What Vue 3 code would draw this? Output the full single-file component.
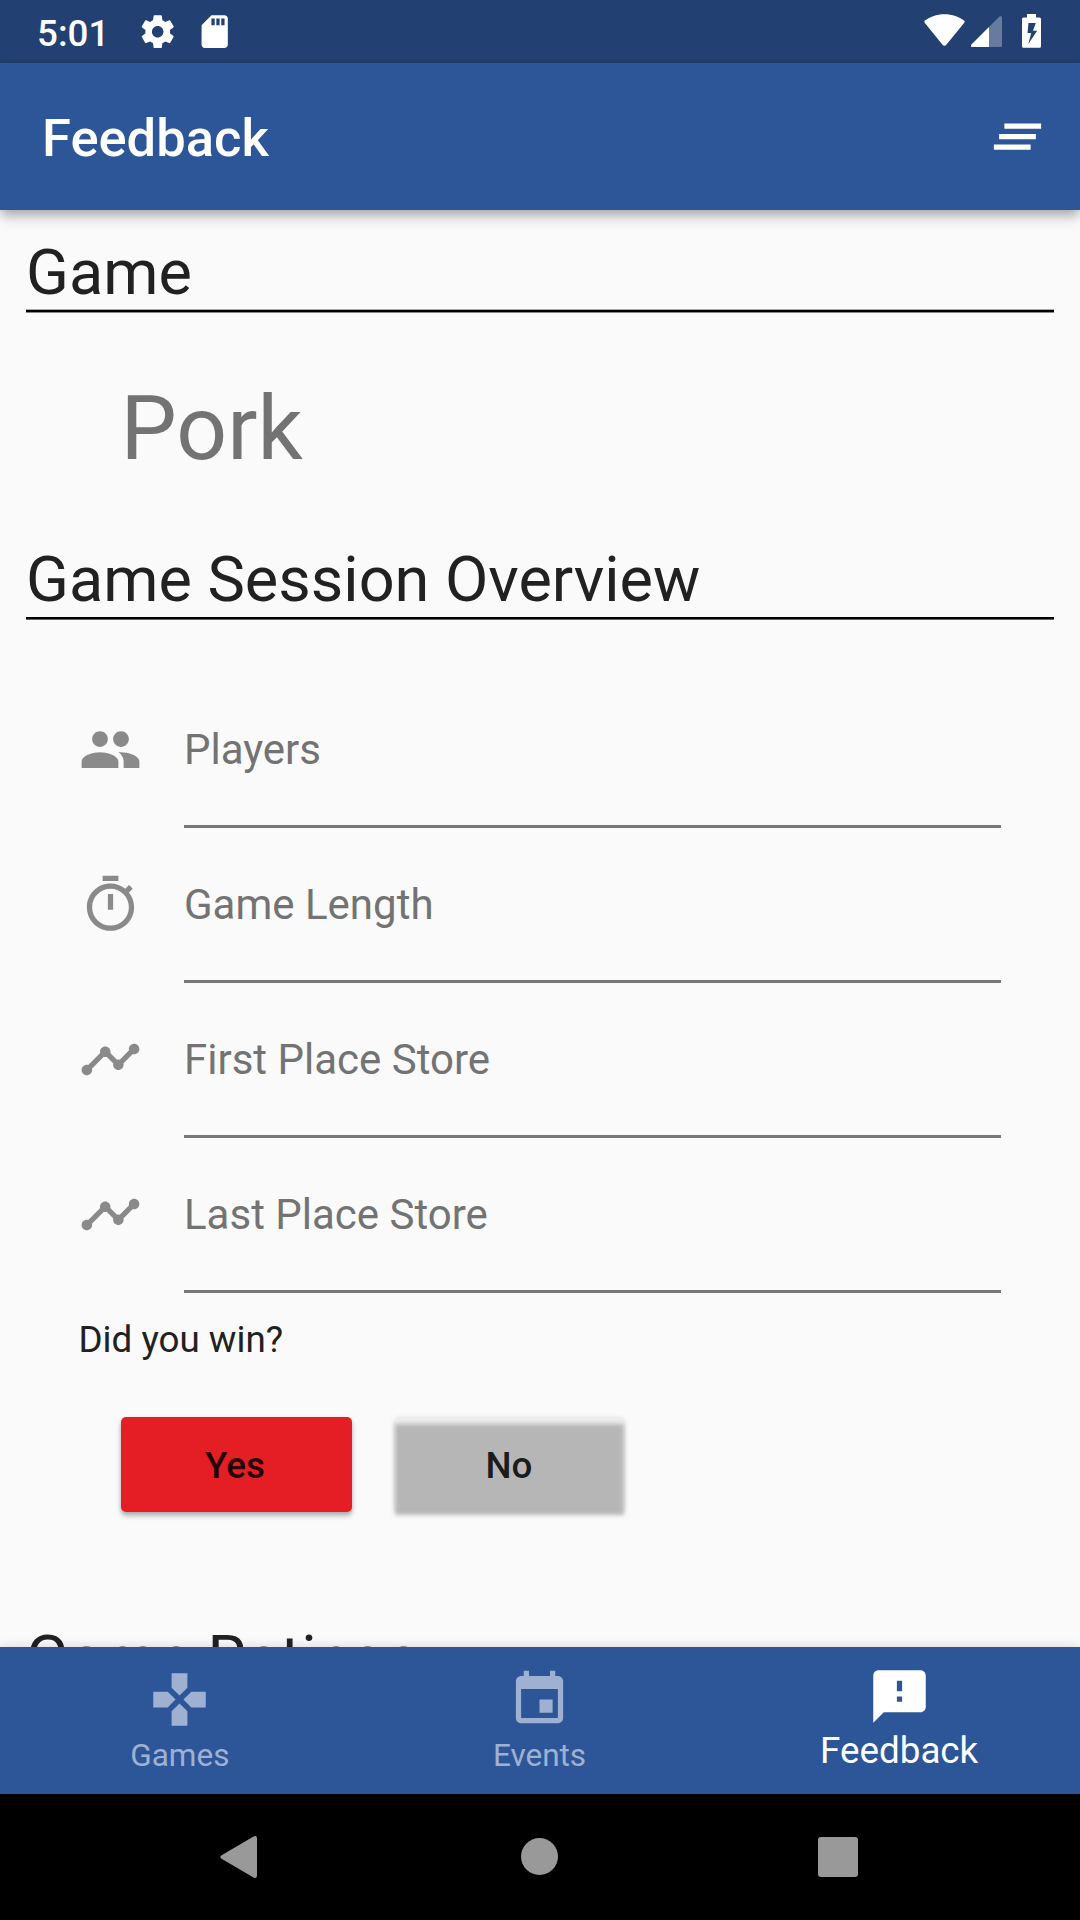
<script setup>
const fields = [
  { label: 'Players', icon: 'M16 11c1.66 0 2.99-1.34 2.99-3S17.66 5 16 5s-3 1.34-3 3 1.34 3 3 3zm-8 0c1.66 0 2.99-1.34 2.99-3S9.66 5 8 5 5 6.34 5 8s1.34 3 3 3zm0 2c-2.33 0-7 1.17-7 3.5V19h14v-2.5c0-2.33-4.67-3.5-7-3.5zm8 0c-.29 0-.62.02-.97.05 1.16.84 1.97 1.97 1.97 3.45V19h6v-2.5c0-2.33-4.67-3.5-7-3.5z' },
  { label: 'Game Length', icon: 'M15 1H9v2h6V1zm-4 13h2V8h-2v6zm8.03-6.61l1.42-1.42c-.43-.51-.9-.99-1.41-1.41l-1.42 1.42C16.07 4.74 14.12 4 12 4c-4.97 0-9 4.03-9 9s4.02 9 9 9 9-4.03 9-9c0-2.12-.74-4.07-1.97-5.61zM12 20c-3.87 0-7-3.13-7-7s3.13-7 7-7 7 3.13 7 7-3.13 7-7 7z' },
  { label: 'First Place Store', icon: 'M23 8c0 1.1-.9 2-2 2-.18 0-.35-.02-.51-.07l-3.56 3.55c.05.16.07.34.07.52 0 1.1-.9 2-2 2s-2-.9-2-2c0-.18.02-.36.07-.52l-2.55-2.55c-.16.05-.34.07-.52.07s-.36-.02-.52-.07l-4.55 4.56c.05.16.07.33.07.51 0 1.1-.9 2-2 2s-2-.9-2-2 .9-2 2-2c.18 0 .35.02.51.07l4.56-4.55C8.02 9.36 8 9.18 8 9c0-1.1.9-2 2-2s2 .9 2 2c0 .18-.02.36-.07.52l2.55 2.55c.16-.05.34-.07.52-.07s.36.02.52.07l3.55-3.56C19.02 8.35 19 8.18 19 8c0-1.1.9-2 2-2s2 .9 2 2z' },
]
fields.push({ label: 'Last Place Store', icon: fields[2].icon })

const tabs = [
  { label: 'Games', icon: 'M15 7.5V2H9v5.5l3 3 3-3zM7.5 9H2v6h5.5l3-3-3-3zM9 16.5V22h6v-5.5l-3-3-3 3zM16.5 9l-3 3 3 3H22V9h-5.5z' },
  { label: 'Events', icon: 'M17 12h-5v5h5v-5zM16 1v2H8V1H6v2H5c-1.11 0-1.99.9-1.99 2L3 19c0 1.1.89 2 2 2h14c1.1 0 2-.9 2-2V5c0-1.1-.9-2-2-2h-1V1h-2zm3 18H5V8h14v11z' },
  { label: 'Feedback', active: true, icon: 'M20 2H4c-1.1 0-1.99.9-1.99 2L2 22l4-4h14c1.1 0 2-.9 2-2V4c0-1.1-.9-2-2-2zm-7 12h-2v-2h2v2zm0-4h-2V6h2v4z' },
]
</script>

<template>
  <div class="screen">
    <div class="status">
      <span class="clock">5:01</span>
      <svg class="status-icon gear" viewBox="0 0 24 24"><path d="M19.43 12.98c.04-.32.07-.64.07-.98s-.03-.66-.07-.98l2.11-1.65c.19-.15.24-.42.12-.64l-2-3.46c-.12-.22-.39-.3-.61-.22l-2.49 1c-.52-.4-1.08-.73-1.69-.98l-.38-2.65C14.46 2.18 14.25 2 14 2h-4c-.25 0-.46.18-.49.42l-.38 2.65c-.61.25-1.17.59-1.69.98l-2.49-1c-.23-.09-.49 0-.61.22l-2 3.46c-.13.22-.07.49.12.64l2.11 1.65c-.04.32-.07.65-.07.98s.03.66.07.98l-2.11 1.65c-.19.15-.24.42-.12.64l2 3.46c.12.22.39.3.61.22l2.49-1c.52.4 1.08.73 1.69.98l.38 2.65c.03.24.24.42.49.42h4c.25 0 .46-.18.49-.42l.38-2.65c.61-.25 1.17-.59 1.69-.98l2.49 1c.23.09.49 0 .61-.22l2-3.46c.12-.22.07-.49-.12-.64l-2.11-1.65zM12 15.5c-1.93 0-3.5-1.57-3.5-3.5s1.57-3.5 3.5-3.5 3.5 1.57 3.5 3.5-1.57 3.5-3.5 3.5z" /></svg>
      <svg class="status-icon card" viewBox="0 0 24 24"><path d="M18 2h-8L4.02 8 4 20c0 1.1.9 2 2 2h12c1.1 0 2-.9 2-2V4c0-1.1-.9-2-2-2zm-6 6h-2V4h2v4zm3 0h-2V4h2v4zm3 0h-2V4h2v4z" /></svg>
      <svg class="system-icons" width="124" height="63" viewBox="920 0 124 63">
        <path d="M944.4 14.2C936.5 14.2 930 16.700 925 20.500Q923.800 21.500 924.700 22.800L942.500 44.700Q944.400 46.700 946.300 44.700L964.300 22.800Q965.200 21.500 964 20.500C959 16.700 952.500 14.200 944.400 14.200Z" />
        <path d="M1002 17.500V45.500Q1002 47 1000.500 47H972.500Q970 46.500 971.500 44.500L999.500 16.500Q1001.500 15 1002 17.500Z" opacity=".31" />
        <path d="M989 27V47H972.500Q970 46.500 971.500 44.500Z" />
        <path fill-rule="evenodd" d="M1027 14H1036V17.600H1039.500Q1041 17.600 1041 19.100V46.300Q1041 47.800 1039.500 47.800H1023.500Q1022 47.800 1022 46.300V19.100Q1022 17.600 1023.500 17.600H1027ZM1028.500 23L1027.500 33H1031.200L1028.300 44L1037.200 30.700H1033L1035.800 23Z" />
      </svg>
    </div>

    <header class="appbar">
      <h1>Feedback</h1>
      <svg class="icon" viewBox="0 0 24 24"><path d="M5 13h14v-2H5v2zm-2 4h14v-2H3v2zM7 7v2h14V7H7z" /></svg>
    </header>

    <main>
      <h2>Game</h2>
      <div class="rule first"></div>
      <p class="game-name">Pork</p>
      <h2 class="session">Game Session Overview</h2>
      <div class="rule"></div>
      <form class="fields" @submit.prevent>
        <label v-for="field in fields" :key="field.label" class="field">
          <svg class="icon" viewBox="0 0 24 24"><path :d="field.icon" /></svg>
          <span class="input">{{ field.label }}</span>
        </label>
        <p class="question">Did you win?</p>
        <div class="buttons">
          <button class="yes" type="button">Yes</button>
          <button class="no" type="button"><span>No</span></button>
        </div>
      </form>
      <h2 class="ratings">Game Ratings</h2>
    </main>

    <nav class="tabs">
      <div v-for="tab in tabs" :key="tab.label" class="tab" :class="{ active: tab.active }">
        <svg class="icon" viewBox="0 0 24 24"><path :d="tab.icon" /></svg>
        <span>{{ tab.label }}</span>
      </div>
    </nav>

    <div class="system-nav">
      <svg width="1080" height="126" viewBox="0 1794 1080 126">
        <path d="M222 1855L253.500 1836.600Q257 1835 257 1838.500V1875.500Q257 1879 253.500 1877.400L222 1859Q218.500 1857 222 1855Z" />
        <circle cx="539.500" cy="1856.500" r="18.500" />
        <rect x="818" y="1837" width="40" height="40" rx="3" />
      </svg>
    </div>
  </div>
</template>

<style>
body {
  margin: 0;
}
</style>

<style scoped>
.screen {
  width: 1080px;
  height: 1920px;
  display: flex;
  flex-direction: column;
  overflow: hidden;
  background: #fafafa;
  color: #212121;
  font-family: Roboto, sans-serif;
}
h1,
h2,
p {
  margin: 0;
  font-weight: 400;
}
svg {
  display: block;
  flex: none;
  fill: currentColor;
}
.icon {
  width: 63px;
  height: 63px;
}
.status {
  height: 63px;
  flex: none;
  display: flex;
  background: #224071;
  color: #fff;
}
.clock {
  width: 100.500px;
  margin-left: 37px;
  font-size: 36.75px;
  font-weight: 500;
  line-height: 67px;
}
.status-icon {
  width: 39.400px;
  height: 39.400px;
  margin-top: 12px;
}
.card {
  margin-left: 18.600px;
}
.system-icons {
  margin-left: auto;
  margin-right: 36px;
}
.appbar {
  z-index: 1;
  box-sizing: border-box;
  height: 147px;
  flex: none;
  display: flex;
  align-items: center;
  justify-content: space-between;
  padding: 0 31px 0 42px;
  background: #2d5698;
  color: #fff;
  box-shadow: 0 5px 10px -2px rgba(0, 0, 0, 0.2), 0 10px 13px rgba(0, 0, 0, 0.1), 0 3px 12px rgba(0, 0, 0, 0.12);
}
h1 {
  padding-top: 2px;
  font-size: 52.500px;
  font-weight: 500;
  line-height: 62px;
}
main {
  flex: 1;
  min-height: 0;
  overflow: hidden;
  padding: 26px 26px 0;
}
h2 {
  height: 73px;
  font-size: 63px;
  line-height: 74px;
  white-space: nowrap;
}
.session {
  height: 74px;
}
.rule {
  height: 3px;
  margin-bottom: 53px;
  background: linear-gradient(#000 2px, #666 2px);
}
.rule.first {
  height: 4px;
  margin-bottom: 0;
  background: linear-gradient(#aaa 1px, #000 1px, #000 3px, #888 3px);
}
.game-name {
  height: 104px;
  padding: 64px 0 62px 94.500px;
  color: #737373;
  font-size: 89.250px;
  line-height: 104px;
}
.fields {
  padding: 0 53px 0 52.500px;
}
.field {
  height: 155px;
  display: flex;
  gap: 42.500px;
}
.field .icon {
  margin-top: 45px;
  color: #8a8a8a;
}
.input {
  flex: 1;
  box-sizing: border-box;
  height: 155px;
  padding-top: 52px;
  border-bottom: 3px solid #777;
  color: #737373;
  font-size: 42px;
  line-height: 50px;
}
.question {
  margin-top: 25px;
  font-size: 36.750px;
  line-height: 43px;
}
.buttons {
  display: flex;
  gap: 42px;
  margin: 56px 0 0 42px;
}
button {
  width: 231px;
  height: 95px;
  padding: 2px 0 0;
  border: 0;
  border-radius: 5px;
  color: rgba(0, 0, 0, 0.87);
  font: 500 36.750px/43px Roboto, sans-serif;
}
.yes {
  padding-right: 2px;
  background: #e51e25;
  box-shadow: 0 4px 5px rgba(0, 0, 0, 0.26), 0 1px 4px rgba(0, 0, 0, 0.1);
}
.no {
  position: relative;
  background: rgba(0, 0, 0, 0.05);
  box-shadow: 0 0 4px rgba(0, 0, 0, 0.08);
}
.no::before {
  content: '';
  position: absolute;
  inset: 7px 1px -3px;
  background: #b6b6b6;
  filter: blur(2px);
}
.no span {
  position: relative;
}
.ratings {
  margin-top: 110px;
}
.tabs {
  z-index: 1;
  box-sizing: border-box;
  height: 147px;
  flex: none;
  display: flex;
  padding-right: 1px;
  background: #2d5698;
  box-shadow: 0 0 10px rgba(0, 0, 0, 0.16);
}
.tab {
  flex: 1;
  display: flex;
  flex-direction: column;
  align-items: center;
  padding-top: 20.500px;
  color: #9fb1d2;
  font-size: 31.500px;
  line-height: 37px;
}
.tab span {
  margin-top: 6px;
}
.tab.active {
  padding-top: 17.750px;
  color: #fff;
  font-size: 36.750px;
  line-height: 43px;
}
.tab.active span {
  margin-top: 1px;
}
.system-nav {
  height: 126px;
  flex: none;
  background: #000;
  color: #999;
}
</style>
